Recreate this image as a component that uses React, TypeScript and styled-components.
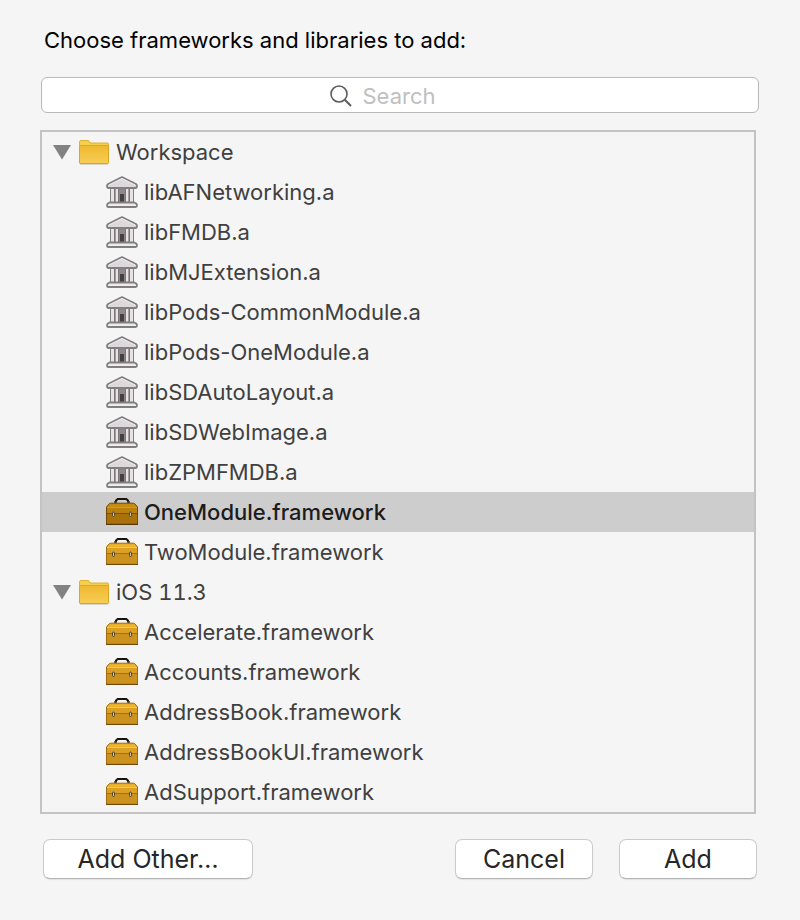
import React, { useState } from "react";
import styled, { createGlobalStyle } from "styled-components";

const GlobalStyle = createGlobalStyle`
  * { box-sizing: border-box; }
  body {
    margin: 0;
    background: #f5f5f5;
    font-family: Inter, "Liberation Sans", sans-serif;
  }
`;

const Sheet = styled.main`
  display: flex;
  flex-direction: column;
  padding: 24px 41px 40px;
`;

const Title = styled.h1`
  margin: 0 0 21px 3px;
  font-size: 22px;
  line-height: 32px;
  font-weight: 400;
  color: #000;
`;

const SearchField = styled.label`
  display: flex;
  align-items: center;
  justify-content: center;
  gap: 11px;
  height: 36px;
  padding: 2px 32px 0 0;
  border: 1px solid #b9b9b9;
  border-radius: 6px;
  background: #fff;
  cursor: text;
`;

const SearchInput = styled.input`
  width: 76px;
  padding: 0;
  border: 0;
  outline: 0;
  background: transparent;
  font: inherit;
  font-size: 22px;
  line-height: 32px;
  color: #262626;
  &::placeholder { color: #bfbfbf; opacity: 1; }
`;

const Tree = styled.ul`
  margin: 17px 3px 25px -1px;
  padding: 0;
  list-style: none;
  border: 2px solid #c3c3c3;
`;

const Group = styled.ul`
  margin: 0;
  padding: 0;
  list-style: none;
`;

const Row = styled.div<{ $selected?: boolean; $child?: boolean }>`
  display: flex;
  align-items: center;
  height: 40px;
  gap: ${(p) => (p.$child ? 6 : 7)}px;
  padding-left: ${(p) => (p.$child ? 64 : 11)}px;
  font-size: 22px;
  line-height: 32px;
  font-weight: ${(p) => (p.$selected ? 450 : 400)};
  font-variant-numeric: ${(p) => (p.$child ? "normal" : "tabular-nums")};
  color: ${(p) => (p.$selected ? "#1c1c1c" : "#404040")};
  background: ${(p) => (p.$selected ? "#cdcdcd" : "transparent")};
  cursor: default;
  svg { flex: none; }
`;

const Disclosure = styled.button<{ $open: boolean }>`
  display: flex;
  width: 19px;
  height: 16px;
  padding: 0;
  border: 0;
  background: none;
  transform: rotate(${(p) => (p.$open ? 0 : -90)}deg);
`;

const Footer = styled.footer`
  display: flex;
  gap: 26px;
  padding: 0 2px;
`;

const PushButton = styled.button<{ $wide?: boolean }>`
  width: ${(p) => (p.$wide ? 210 : 138)}px;
  height: 40px;
  margin-right: ${(p) => (p.$wide ? "auto" : "0")};
  padding: 0;
  border: 1px solid #cbcbcb;
  border-bottom-color: #b4b4b4;
  border-radius: 7px;
  background: #fff;
  box-shadow: 0 1px 1px rgba(0, 0, 0, 0.08);
  font: inherit;
  font-size: 25px;
  line-height: 36px;
  color: #262626;
`;

const SearchIcon = () => (
  <svg width="22" height="22" viewBox="0 0 22 22" fill="none" stroke="#5c5c5c" aria-hidden="true">
    <circle cx="9" cy="9" r="8" strokeWidth="1.6" />
    <path d="M14.8 14.8L21 21" strokeWidth="2" />
  </svg>
);

const FolderIcon = () => (
  <svg width="30" height="26" viewBox="0 0 30 26" aria-hidden="true">
    <defs>
      <linearGradient id="folder" x1="0" y1="0" x2="0" y2="1">
        <stop offset="0" stopColor="#efb92f" />
        <stop offset="1" stopColor="#f7cd55" />
      </linearGradient>
    </defs>
    <path d="M1 25.5H29" stroke="#d8d3c6" />
    <path d="M.5 23.5V3Q.5 1.5 2 1.5H9Q10 1.5 10.3 2.500L11 4H28.500Q29.500 4 29.500 5V23.500Q29.500 24.500 28.500 24.500H1.500Q.5 24.500 .5 23.500Z" fill="#f5cf50" stroke="#dfb033" />
    <path d="M.5 7.500Q.5 6.500 1.500 6.500H28.500Q29.500 6.500 29.500 7.500V23.500Q29.500 24.500 28.500 24.500H1.500Q.5 24.500 .5 23.500Z" fill="url(#folder)" stroke="#dba624" />
  </svg>
);

const LibraryIcon = () => (
  <svg width="32" height="32" viewBox="0 0 32 32" aria-hidden="true">
    <path d="M4 12H28V27H4Z" fill="#a39da0" />
    <path d="M4.500 12V27M27.500 12V27" stroke="#808080" />
    <path d="M5 13H8V27H5ZM10 13H12V27H10ZM20 13H22V27H20ZM24 13H27V27H24Z" fill="#e8e2e5" />
    <path d="M8.500 13V27M12.500 13V27M19.500 13V27M23.500 13V27" stroke="#7d7477" />
    <path d="M13 13H19V27H13Z" fill="#8f888a" />
    <path d="M14 18H18V26H14Z" fill="#454143" />
    <path d="M4 12.500H28" stroke="#777" />
    <path d="M16 1L30 8Q31 8.500 31 10Q31 12 29.500 12H2.500Q1 12 1 10Q1 8.500 2 8Z" fill="#ddd8db" stroke="#7f7f7f" strokeWidth="1.800" strokeLinejoin="round" />
    <path d="M3 9L16 2.600L29 9" fill="none" stroke="#f0edef" />
    <path d="M3.500 26.500H28.500Q31 27.500 31 29.500Q31 31 29.500 31H2.500Q1 31 1 29.500Q1 27.500 3.500 26.500Z" fill="#eeeaec" stroke="#7f7f7f" strokeWidth="1.800" strokeLinejoin="round" />
  </svg>
);

const ToolboxIcon = ({ dark }: { dark?: boolean }) => (
  <svg width="32" height="32" viewBox="0 0 32 32" aria-hidden="true">
    <path d="M10 6V4.500L12 2.900H20L22 4.500V6" fill="none" stroke="#171410" strokeWidth="2" strokeLinejoin="round" />
    <path d="M9.500 5V7.500M22.500 5V7.500" stroke="#333" strokeWidth="2.500" />
    <path d="M.5 28V11L3 8Q3.500 7.200 4.500 7.200H27.500Q28.500 7.200 29 8L31.500 11V28Z" fill={dark ? "#b9800d" : "#dca027"} stroke={dark ? "#73480a" : "#a36a10"} />
    <path d="M3.500 8.300H28.500L30.500 11H1.500Z" fill={dark ? "#c78d13" : "#edb52c"} />
    <path d="M1 11.500H31" stroke={dark ? "#d09a24" : "#f1c84c"} />
    <path d="M1 17.500H31V27H1Z" fill={dark ? "#a9710a" : "#cc921f"} />
    <path d="M1 17.500H31" stroke={dark ? "#79500c" : "#a46d16"} />
    <path d="M0 28.500H32" stroke={dark ? "#573606" : "#754809"} />
    {[6.5, 23.5].map((x) => (
      <rect key={x} x={x} y="16" width="2" height="4.500" rx="1" fill="#c9c4b4" stroke="#51452f" />
    ))}
  </svg>
);

const groups = [
  {
    name: "Workspace",
    items: [
      "libAFNetworking.a", "libFMDB.a", "libMJExtension.a", "libPods-CommonModule.a",
      "libPods-OneModule.a", "libSDAutoLayout.a", "libSDWebImage.a", "libZPMFMDB.a",
      "OneModule.framework", "TwoModule.framework",
    ],
  },
  {
    name: "iOS 11.3",
    items: [
      "Accelerate.framework", "Accounts.framework", "AddressBook.framework",
      "AddressBookUI.framework", "AdSupport.framework",
    ],
  },
];

export default function App() {
  const [selected, setSelected] = useState("OneModule.framework");
  const [closed, setClosed] = useState<string[]>([]);
  const [query, setQuery] = useState("");

  const toggle = (name: string) =>
    setClosed((c) => (c.includes(name) ? c.filter((n) => n !== name) : [...c, name]));

  return (
    <>
      <GlobalStyle />
      <Sheet>
        <Title>Choose frameworks and libraries to add:</Title>
        <SearchField>
          <SearchIcon />
          <SearchInput
            type="text"
            aria-label="Search"
            placeholder="Search"
            value={query}
            onChange={(e) => setQuery(e.target.value)}
          />
        </SearchField>
        <Tree role="tree" aria-label="Frameworks and libraries">
          {groups.map((group) => {
            const open = !closed.includes(group.name);
            return (
              <li key={group.name} role="treeitem" aria-expanded={open}>
                <Row>
                  <Disclosure type="button" $open={open} aria-label={`Toggle ${group.name}`} onClick={() => toggle(group.name)}>
                    <svg width="18" height="16" viewBox="0 0 18 16" aria-hidden="true">
                      <path d="M0 1H18L9 15.500Z" fill="#828282" />
                    </svg>
                  </Disclosure>
                  <FolderIcon />
                  {group.name}
                </Row>
                {open && (
                  <Group role="group">
                    {group.items
                      .filter((item) => item.toLowerCase().includes(query.toLowerCase()))
                      .map((item) => (
                        <li key={item} role="treeitem" aria-selected={item === selected} onClick={() => setSelected(item)}>
                          <Row $child $selected={item === selected}>
                            {item.endsWith(".a") ? <LibraryIcon /> : <ToolboxIcon dark={item === selected} />}
                            {item}
                          </Row>
                        </li>
                      ))}
                  </Group>
                )}
              </li>
            );
          })}
        </Tree>
        <Footer>
          <PushButton type="button" $wide>Add Other…</PushButton>
          <PushButton type="button">Cancel</PushButton>
          <PushButton type="button">Add</PushButton>
        </Footer>
      </Sheet>
    </>
  );
}
